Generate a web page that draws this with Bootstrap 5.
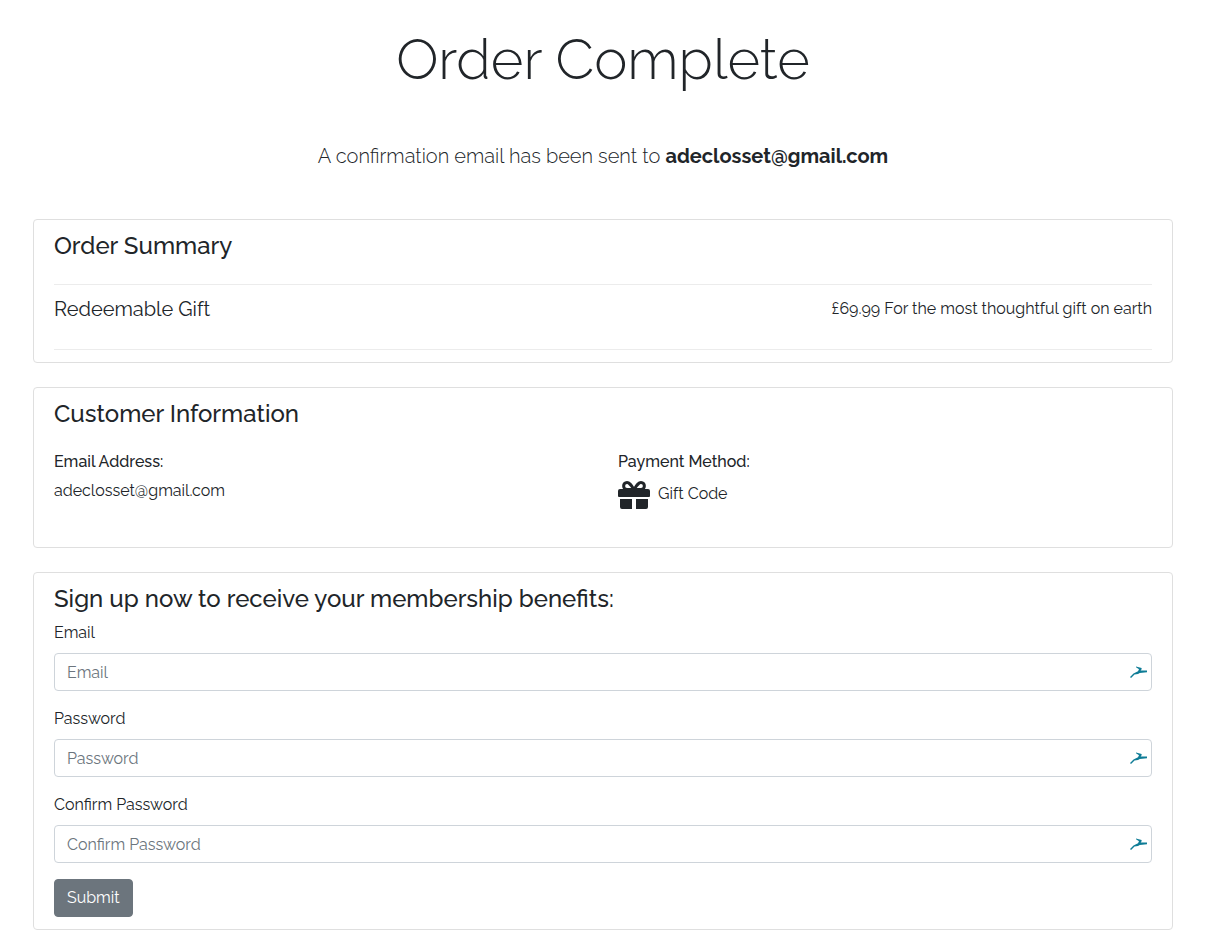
<!DOCTYPE html>
<html lang="en">
<head>
<meta charset="utf-8">
<meta name="viewport" content="width=device-width, initial-scale=1">
<title>Order Complete</title>
<link href="https://cdn.jsdelivr.net/npm/bootstrap@5.3.0/dist/css/bootstrap.min.css" rel="stylesheet">
<style>
body { font-family: Raleway, Lato, "Open Sans", sans-serif; font-size: 16px; line-height: 24px; color: #212529; }
.page { padding: 24px 37px 16px 33px; }
.page-title { font-size: 56px; line-height: 70px; font-weight: 300; margin-bottom: 47px; }
.sent-note { font-size: 20px; line-height: 30px; font-weight: 300; margin-bottom: 48px; }
.panel { border: 1px solid #dfdfdf; border-radius: 4px; padding: 12px 20px; margin-bottom: 24px; }
.panel h2 { font-size: 24px; line-height: 27px; font-weight: 500; margin: 0; }
.summary-line { border: solid #ececec; border-width: 1px 0; margin-top: 25px; padding: 12px 0 28px; }
.item-name { font-size: 20px; line-height: 24px; font-weight: 400; margin: 0; }
.info-row { --bs-gutter-x: 30px; margin-top: 23px; padding-bottom: 26px; }
.info-row h3 { font-size: 16px; line-height: 24px; font-weight: 500; margin-bottom: 5px; }
.pay-method { padding-top: 2px; line-height: 26px; }
.signup-form { padding-top: 9px; }
.field-input { height: 38px; font-size: 16px; line-height: 24px; padding: 6px 36px 6px 12px; border-color: #ced4da; border-radius: 4px; }
.field-input::placeholder { color: #6c757d; }
.fill-mark { right: 4px; top: 50%; margin-top: -8px; pointer-events: none; }
.send-btn { height: 38px; font-size: 16px; line-height: 24px; padding: 6px 12px; border-radius: 4px; background: #6c757d; }
</style>
</head>
<body>
<svg width="0" height="0" class="position-absolute" aria-hidden="true">
  <symbol id="bird" viewBox="0 0 18 16">
    <path d="M0 13L3.500 9.500L8 7.300L9 5.200L6 3.200V2.400L11.600 4V5.200L10.600 6.600L17 6.600V8.200L9.800 8.900L8 10L4.500 10.600L1 14Z" fill="#0e7c96"/>
  </symbol>
</svg>
<main class="page container-fluid">
  <header class="text-center">
    <h1 class="page-title">Order Complete</h1>
    <p class="sent-note">A confirmation email has been sent to <strong class="fw-bold">adeclosset@gmail.com</strong></p>
  </header>

  <section class="panel">
    <h2>Order Summary</h2>
    <div class="summary-line d-flex justify-content-between">
      <h3 class="item-name">Redeemable Gift</h3>
      <span>£69.99 For the most thoughtful gift on earth</span>
    </div>
  </section>

  <section class="panel">
    <h2>Customer Information</h2>
    <div class="row info-row">
      <div class="col-6">
        <h3>Email Address:</h3>
        <div>adeclosset@gmail.com</div>
      </div>
      <div class="col-6">
        <h3>Payment Method:</h3>
        <div class="pay-method d-flex align-items-start gap-2">
          <svg width="32" height="28" viewBox="0 0 32 28" fill="#212529" aria-hidden="true">
            <path d="M2 8H30Q32 8 32 10V15Q32 16 31 16H1Q0 16 0 15V10Q0 8 2 8Z"/>
            <path d="M2 18H14V28H4Q2 28 2 26ZM18 18H30V26Q30 28 28 28H18Z"/>
            <path d="M16 8.500C13 4 11.500 1.500 9 1.500C4.500 1.500 4.500 8.500 9 8.500H23C27.500 8.500 27.500 1.500 23 1.500C20.500 1.500 19 4 16 8.500Z" fill="none" stroke="#212529" stroke-width="3"/>
          </svg>
          <span>Gift Code</span>
        </div>
      </div>
    </div>
  </section>

  <section class="panel mb-0">
    <h2>Sign up now to receive your membership benefits:</h2>
    <form class="signup-form">
      <div class="mb-3">
        <label for="email" class="d-block mb-2">Email</label>
        <div class="position-relative">
          <input type="email" id="email" class="form-control field-input" placeholder="Email">
          <svg class="fill-mark position-absolute" width="18" height="16" aria-hidden="true"><use href="#bird"/></svg>
        </div>
      </div>
      <div class="mb-3">
        <label for="password" class="d-block mb-2">Password</label>
        <div class="position-relative">
          <input type="password" id="password" class="form-control field-input" placeholder="Password">
          <svg class="fill-mark position-absolute" width="18" height="16" aria-hidden="true"><use href="#bird"/></svg>
        </div>
      </div>
      <div class="mb-3">
        <label for="confirm" class="d-block mb-2">Confirm Password</label>
        <div class="position-relative">
          <input type="password" id="confirm" class="form-control field-input" placeholder="Confirm Password">
          <svg class="fill-mark position-absolute" width="18" height="16" aria-hidden="true"><use href="#bird"/></svg>
        </div>
      </div>
      <button type="submit" class="btn btn-secondary send-btn">Submit</button>
    </form>
  </section>
</main>
<script src="https://cdn.jsdelivr.net/npm/bootstrap@5.3.0/dist/js/bootstrap.bundle.min.js"></script>
</body>
</html>
